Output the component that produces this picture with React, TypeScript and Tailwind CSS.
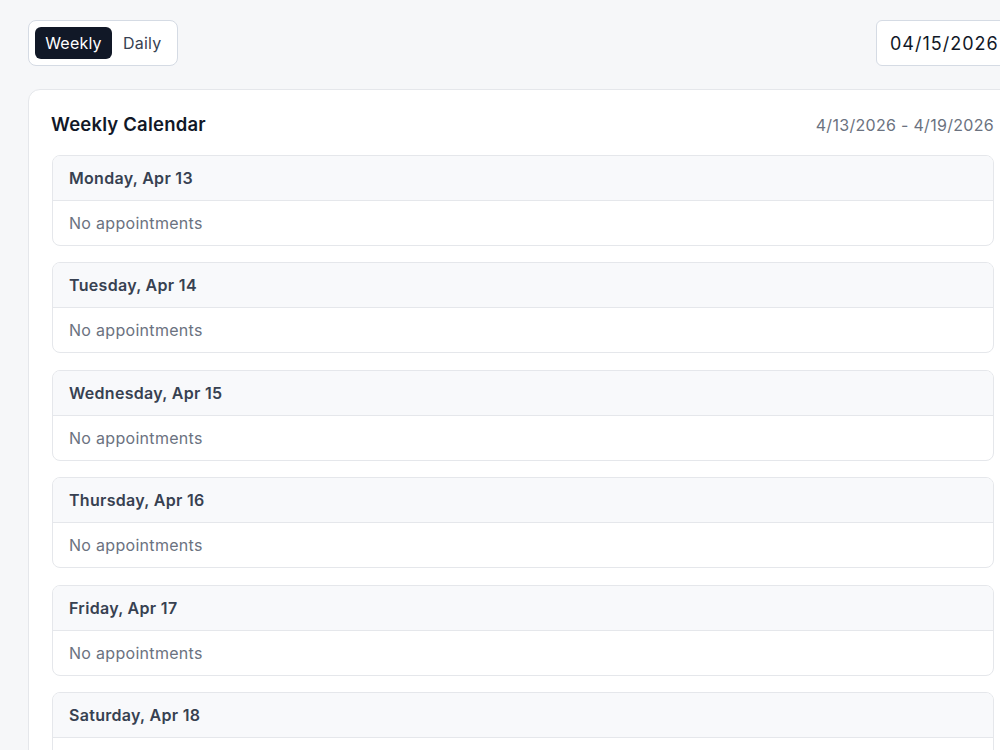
import React from "react";

const days = [
  "Monday, Apr 13",
  "Tuesday, Apr 14",
  "Wednesday, Apr 15",
  "Thursday, Apr 16",
  "Friday, Apr 17",
  "Saturday, Apr 18",
  "Sunday, Apr 19",
];

export default function App() {
  return (
    <div
      className="min-h-screen bg-[#f6f7f9] pt-5 pb-10 pl-7"
      style={{ fontFamily: "Inter, 'Noto Sans', sans-serif" }}
    >
      <div className="w-[989px]">
        {/* Top bar */}
        <div className="flex items-center justify-between">
          <div className="flex items-center h-[46px] pl-[6px] pr-[8px] gap-[3px] rounded-lg border border-[#d5dbe4] bg-white">
            <button className="h-8 w-[77px] rounded-md bg-[#111827] text-white text-[16px] tracking-[0.2px]">
              Weekly
            </button>
            <button className="h-8 px-[8px] rounded-md text-[#374151] text-[16px] tracking-[0.2px]">
              Daily
            </button>
          </div>
          <div className="h-[46px] w-[141px] flex items-center px-[13px] rounded-md border border-[#d5dbe4] bg-white text-[18px] text-[#111827] tracking-[1px]">
            04/15/2026
          </div>
        </div>

        {/* Calendar card */}
        <div className="mt-[23px] rounded-xl border border-[#e5e7eb] bg-white px-[22px] pt-[23px] pb-6">
          <div className="flex items-center justify-between h-6 mb-[18px]">
            <h2 className="text-[18.5px] font-semibold text-[#111827] tracking-[0.2px]">Weekly Calendar</h2>
            <span className="text-[16px] text-[#6b7280] tracking-[0.3px]">4/13/2026 - 4/19/2026</span>
          </div>

          <div className="flex flex-col gap-[16.4px] pl-px">
            {days.map((d) => (
              <div key={d} className="rounded-lg border border-[#e5e7eb] overflow-hidden">
                <div className="h-[45px] flex items-center px-4 bg-[#f8f9fb] border-b border-[#e5e7eb] text-[16px] font-semibold text-[#374151] tracking-[0.3px]">
                  {d}
                </div>
                <div className="h-[44px] flex items-center px-4 text-[16px] text-[#6b7280] tracking-[0.3px]">
                  No appointments
                </div>
              </div>
            ))}
          </div>
        </div>
      </div>
    </div>
  );
}
